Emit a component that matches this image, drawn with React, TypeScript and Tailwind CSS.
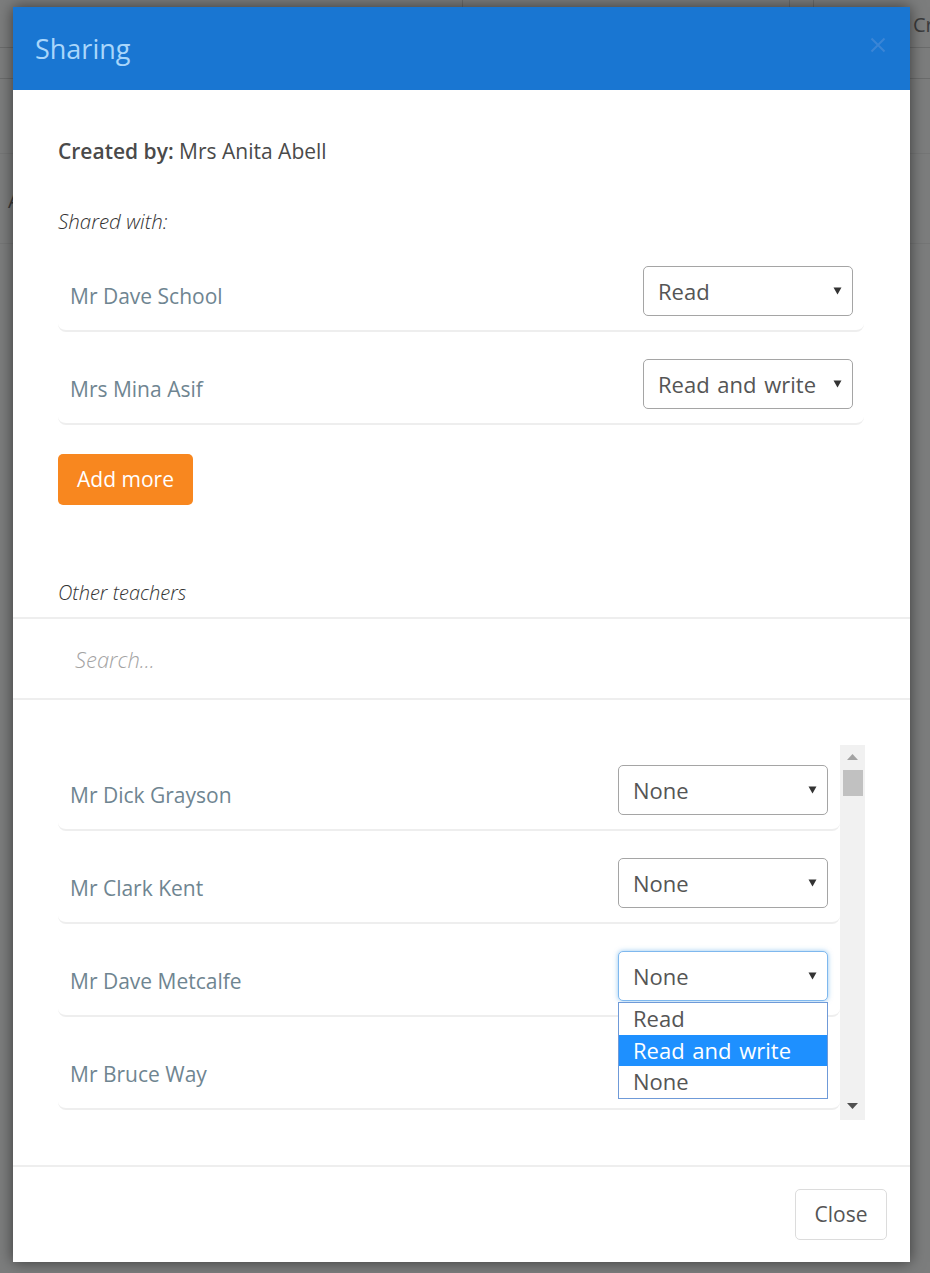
const sans = "font-['Open_Sans',sans-serif]";

function Caret() {
  return (
    <svg width="9" height="8" viewBox="0 0 9 8" className="mt-[-1px] shrink-0">
      <path d="M0.5 0.5h8L4.5 7.5z" fill="#333333" />
    </svg>
  );
}

function Select({ value, focused }: { value: string; focused?: boolean }) {
  return (
    <div
      className={`flex h-[50px] w-[210px] items-center justify-between rounded-[5px] border bg-white pl-[14px] pr-[10px] text-[#555] ${
        focused ? "border-[#7fb8ee] shadow-[0_0_5px_rgba(102,175,233,0.7)]" : "border-[#a5a5a5]"
      }`}
    >
      <span className="text-[22px] leading-none [word-spacing:2px]">{value}</span>
      <Caret />
    </div>
  );
}

function PersonRow({ name, value, focused, pad }: { name: string; value: string; focused?: boolean; pad: string }) {
  return (
    <div className={`flex h-[65px] items-end justify-between rounded-b-[8px] border-b-2 border-[#eeeeee] pb-[14px] pl-3 ${pad}`}>
      <span className="mb-[5px] text-[21px] leading-[30px] text-[#6f8591]">{name}</span>
      <div className="relative">
        <Select value={value} focused={focused} />
        {focused && (
          <div className="absolute left-0 top-[51px] z-10 w-[210px] border border-[#6f9ad8] bg-white text-[22px] leading-[31.5px] text-[#555] [word-spacing:2px]">
            <div className="pl-[14px]">Read</div>
            <div className="bg-[#1e90ff] pl-[14px] text-white">Read and write</div>
            <div className="pl-[14px]">None</div>
          </div>
        )}
      </div>
    </div>
  );
}

export default function App() {
  return (
    <div className={`relative h-[1273px] w-[930px] overflow-hidden bg-[#7c7d7d] pl-[13px] pt-[7px] ${sans}`}>
      {/* page behind the backdrop */}
      <div className="absolute inset-x-0 top-[47px] h-px bg-[#6b6c6c]" />
      <div className="absolute inset-x-0 top-[78px] h-px bg-[#6b6c6c]" />
      <div className="absolute inset-x-0 top-[153px] h-px bg-[#757676]" />
      <div className="absolute inset-x-0 top-[243px] h-px bg-[#757676]" />
      <div className="absolute left-[462px] top-0 h-[7px] w-px bg-[#6b6c6c]" />
      <div className="absolute left-[789px] top-0 h-[7px] w-px bg-[#6b6c6c]" />
      <div className="absolute left-[813px] top-0 h-[7px] w-px bg-[#6b6c6c]" />
      <span className="absolute left-[913px] top-[10px] text-[20px] text-[#3a3b3c]">Cr</span>
      <span className="absolute left-[8px] top-[186px] text-[20px] text-[#3a3b3c]">A</span>

      <div className="relative flex h-[1255px] w-[897px] flex-col bg-white shadow-[0_0_14px_rgba(0,0,0,0.55)]">
        <div className="flex h-[83px] shrink-0 items-center justify-between bg-[#1976d2] pl-[22px] pr-6">
          <h1 className="mt-[-1px] text-[27px] font-normal leading-none text-[#a9d6fb]">Sharing</h1>
          <svg width="16" height="16" viewBox="0 0 16 16" className="mt-[-8px]">
            <path d="M1.5 1.5l13 13M14.5 1.5l-13 13" stroke="#3a85d6" strokeWidth="2" fill="none" />
          </svg>
        </div>

        <div className="px-[45px] pt-[46px]">
          <p className="text-[21px] leading-[30px] text-[#4a4a4a]">
            <strong className="font-semibold">Created by:</strong> Mrs Anita Abell
          </p>
          <p className="mt-[40px] text-[20.5px] font-light italic leading-[30px] text-[#333]">Shared with:</p>
          <div className="mt-[31px] w-[806px]">
            <PersonRow name="Mr Dave School" value="Read" pad="pr-[11px]" />
            <div className="mt-[28px]" />
            <PersonRow name="Mrs Mina Asif" value="Read and write" pad="pr-[11px]" />
          </div>
          <button className="mt-[29px] h-[51px] w-[135px] rounded-[5px] bg-[#f8871f] text-[21px] text-white">Add more</button>
          <p className="mt-[73px] text-[20px] font-light italic leading-[30px] text-[#333]">Other teachers</p>
        </div>

        <div className="mt-[9px] flex h-[83px] shrink-0 items-center border-y-2 border-[#eeeeee] pl-[62px] pt-[2px] text-[22px] font-light italic text-[#a3a3a3]">
          Search...
        </div>

        <div className="flex flex-1 pl-[45px] pt-[45px]">
          <div className="flex h-[375px] w-[807px]">
            <div className="w-[782px] pt-[21px]">
              <PersonRow name="Mr Dick Grayson" value="None" pad="pr-[12px]" />
              <div className="mt-[28px]" />
              <PersonRow name="Mr Clark Kent" value="None" pad="pr-[12px]" />
              <div className="mt-[28px]" />
              <PersonRow name="Mr Dave Metcalfe" value="None" focused pad="pr-[12px]" />
              <div className="mt-[28px]" />
              <PersonRow name="Mr Bruce Way" value="None" pad="pr-[12px]" />
            </div>
            <div className="flex w-[25px] flex-col items-center bg-[#f1f1f1] pt-[9px]">
              <svg width="11" height="6" viewBox="0 0 11 6"><path d="M5.5 0L11 6H0z" fill="#a3a3a3" /></svg>
              <div className="mt-[10px] h-[26px] w-[20px] bg-[#c1c1c1]" />
              <div className="flex-1" />
              <svg width="11" height="6" viewBox="0 0 11 6" className="mb-[11px]"><path d="M0 0h11L5.5 6z" fill="#505050" /></svg>
            </div>
          </div>
        </div>

        <div className="flex h-[97px] shrink-0 items-start justify-end border-t-2 border-[#eeeeee] pr-[23px] pt-[22px]">
          <button className="h-[51px] w-[92px] rounded-[5px] border border-[#dcdcdc] bg-white text-[21px] text-[#555]">Close</button>
        </div>
      </div>
    </div>
  );
}
